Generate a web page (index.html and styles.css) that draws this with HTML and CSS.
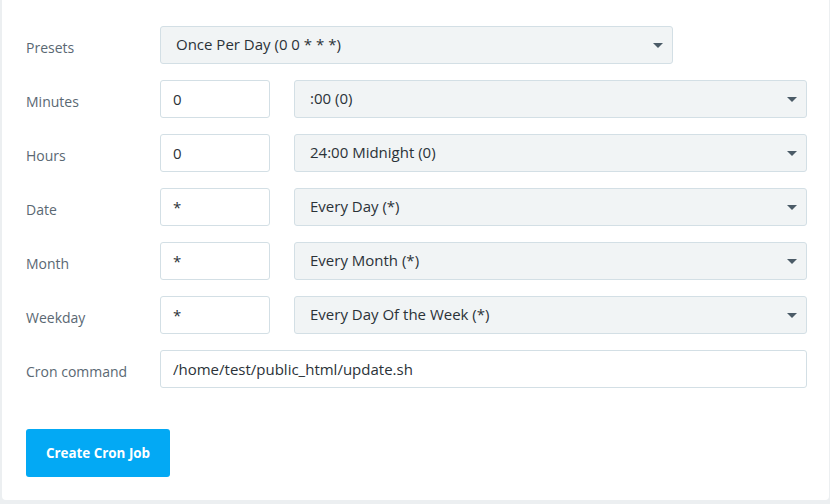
FILE: index.html
```html
<!DOCTYPE html>
<html lang="en">
<head>
    <meta charset="UTF-8">
    <title>Cron Jobs</title>
    <link rel="stylesheet" href="styles.css">
</head>
<body>

    <div class="card">
        <form class="cron-form">
            <div class="row">
                <label class="label">Presets</label>
                <div class="select-wrap preset">
                    <select class="select">
                        <option>Once Per Day (0 0 * * *)</option>
                    </select>
                    <svg class="caret" width="10" height="5" viewBox="0 0 10 5"><path d="M0 0h10L5 5z" fill="#4b5b67"/></svg>
                </div>
            </div>

            <div class="row">
                <label class="label">Minutes</label>
                <input class="input small" type="text" value="0">
                <div class="select-wrap">
                    <select class="select">
                        <option>:00 (0)</option>
                    </select>
                    <svg class="caret" width="10" height="5" viewBox="0 0 10 5"><path d="M0 0h10L5 5z" fill="#4b5b67"/></svg>
                </div>
            </div>

            <div class="row">
                <label class="label">Hours</label>
                <input class="input small" type="text" value="0">
                <div class="select-wrap">
                    <select class="select">
                        <option>24:00 Midnight (0)</option>
                    </select>
                    <svg class="caret" width="10" height="5" viewBox="0 0 10 5"><path d="M0 0h10L5 5z" fill="#4b5b67"/></svg>
                </div>
            </div>

            <div class="row">
                <label class="label">Date</label>
                <input class="input small" type="text" value="*">
                <div class="select-wrap">
                    <select class="select">
                        <option>Every Day (*)</option>
                    </select>
                    <svg class="caret" width="10" height="5" viewBox="0 0 10 5"><path d="M0 0h10L5 5z" fill="#4b5b67"/></svg>
                </div>
            </div>

            <div class="row">
                <label class="label">Month</label>
                <input class="input small" type="text" value="*">
                <div class="select-wrap">
                    <select class="select">
                        <option>Every Month (*)</option>
                    </select>
                    <svg class="caret" width="10" height="5" viewBox="0 0 10 5"><path d="M0 0h10L5 5z" fill="#4b5b67"/></svg>
                </div>
            </div>

            <div class="row">
                <label class="label">Weekday</label>
                <input class="input small" type="text" value="*">
                <div class="select-wrap">
                    <select class="select">
                        <option>Every Day Of the Week (*)</option>
                    </select>
                    <svg class="caret" width="10" height="5" viewBox="0 0 10 5"><path d="M0 0h10L5 5z" fill="#4b5b67"/></svg>
                </div>
            </div>

            <div class="row">
                <label class="label">Cron command</label>
                <input class="input wide" type="text" value="/home/test/public_html/update.sh">
            </div>

            <button class="btn" type="button">Create Cron Job</button>
        </form>
    </div>

</body>
</html>
```

FILE: styles.css
```css
body {
    margin: 0;
    padding: 0;
    background-color: #eceff1;
    font-family: "Open Sans", Arial, sans-serif;
    overflow: hidden;
}

.card {
    margin: 0 1px 0 2px;
    height: 500px;
    background-color: #fff;
    border-radius: 0 0 4px 4px;
    box-sizing: border-box;
    padding: 26px 22px 23px 24px;
}

.cron-form {
    display: flex;
    flex-direction: column;
    gap: 16px;
}

.row {
    display: flex;
    align-items: center;
    gap: 24px;
}

.label {
    width: 110px;
    font-size: 14px;
    color: #5a6873;
    padding-top: 4px;
}

.input,
.select {
    box-sizing: border-box;
    height: 38px;
    border: 1px solid #d3dfe5;
    border-radius: 3px;
    font-family: "Open Sans", Arial, sans-serif;
    font-size: 15px;
    color: #2b3238;
    outline: none;
}

.input {
    background-color: #fff;
    padding: 0 12px;
}

.input.small {
    width: 110px;
}

.input.wide {
    width: 647px;
}

.select-wrap {
    position: relative;
    width: 513px;
}

.select {
    width: 100%;
    appearance: none;
    -webkit-appearance: none;
    background-color: #f1f4f5;
    padding: 0 30px 2px 15px;
}

.caret {
    position: absolute;
    right: 10px;
    top: 17px;
    pointer-events: none;
}

.btn {
    margin-top: 25px;
    width: 144px;
    height: 48px;
    background-color: #03a9f4;
    color: #fff;
    border: none;
    border-radius: 3px;
    font-family: "Open Sans", Arial, sans-serif;
    font-size: 13.4px;
    font-weight: bold;
    cursor: pointer;
}
```
